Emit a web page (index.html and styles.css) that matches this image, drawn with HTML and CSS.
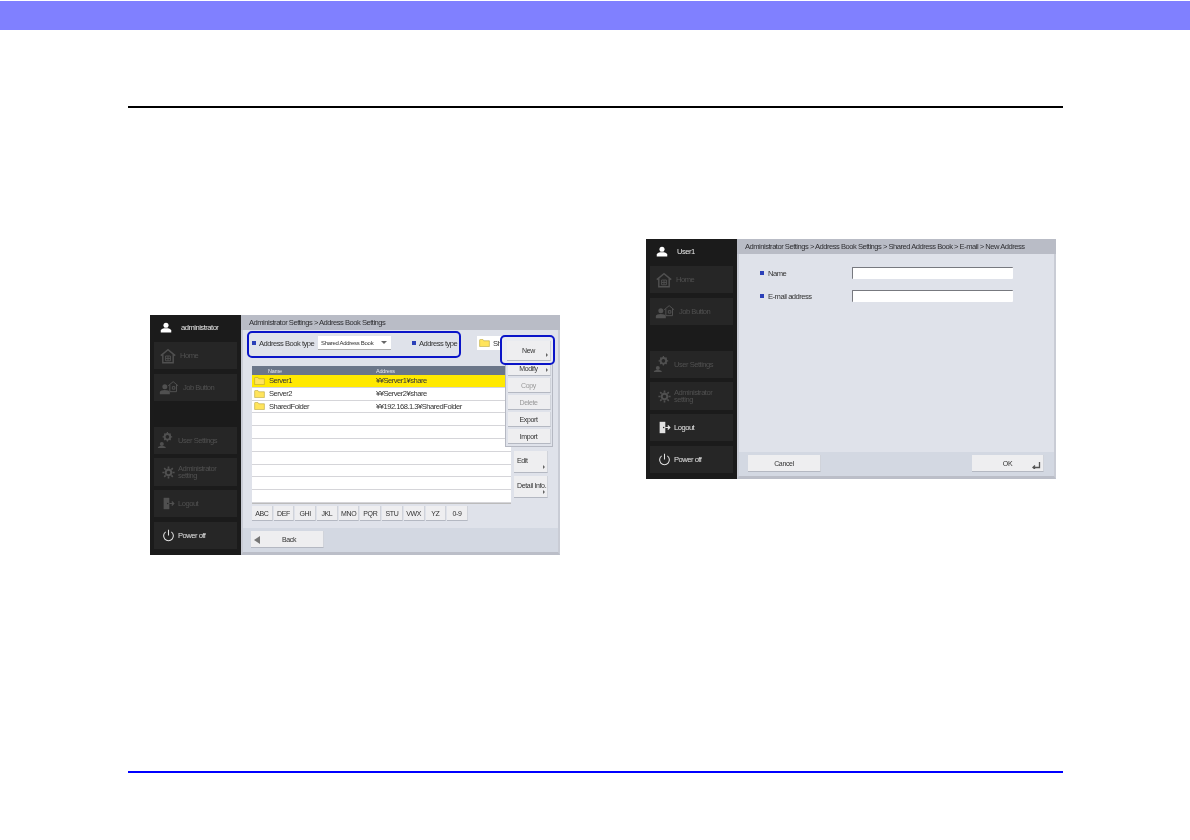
FILE: index.html
```html
<!DOCTYPE html>
<html>
<head>
    <meta charset="UTF-8">
    <title>Address Book Settings</title>
    <link rel="stylesheet" href="styles.css">
</head>
<body>
    <svg class="defs" width="0" height="0">
        <symbol id="i-user" viewBox="0 0 16 14">
            <circle cx="8" cy="4" r="3.4" fill="currentColor"/>
            <path d="M1 13.500V11c0-1.600 3-2.600 4.500-3h5c1.500.4 4.500 1.400 4.500 3v2.500z" fill="currentColor"/>
        </symbol>
        <symbol id="i-home" viewBox="0 0 20 20">
            <path d="M1 9.500L10 2l9 7.500M3.500 8v10.500h13V8" fill="none" stroke="currentColor" stroke-width="1.800"/>
            <path d="M7 10h6v6H7zM10 10v6M7 13h6" fill="none" stroke="currentColor" stroke-width="1.200"/>
        </symbol>
        <symbol id="i-job" viewBox="0 0 24 18">
            <circle cx="7" cy="8" r="3" fill="currentColor"/>
            <path d="M1 17v-2.500C1 13 4 12 7 12s6 1 6 2.500V17z" fill="currentColor"/>
            <path d="M11 7l6-5 6 5M13 6v8h8V6M16 8h3v3h-3z" fill="none" stroke="currentColor" stroke-width="1.200"/>
        </symbol>
        <symbol id="i-settings" viewBox="0 0 20 20">
            <circle cx="6" cy="15" r="2.500" fill="currentColor"/>
            <path d="M1 20c0-2 2-2.500 5-2.500s5 .5 5 2.500z" fill="currentColor"/>
            <circle cx="13" cy="6" r="3.500" fill="none" stroke="currentColor" stroke-width="2.400"/>
            <path d="M13 0v2.500M13 9.500V12M7 6h2.500M16.500 6H19M9 2l1.500 1.500M15.500 8.500L17 10M17 2l-1.500 1.500M10.500 8.500L9 10" stroke="currentColor" stroke-width="1.600"/>
        </symbol>
        <symbol id="i-gear" viewBox="0 0 16 16">
            <circle cx="8" cy="8" r="3.500" fill="none" stroke="currentColor" stroke-width="2.600"/>
            <path d="M8 .5V3M8 13v2.500M.5 8H3M13 8h2.500M2.700 2.700l1.800 1.800M11.500 11.500l1.800 1.800M13.300 2.700l-1.800 1.800M4.500 11.500l-1.800 1.800" stroke="currentColor" stroke-width="2"/>
        </symbol>
        <symbol id="i-logout" viewBox="0 0 16 16">
            <path d="M2 1h7v14H2z" fill="currentColor"/>
            <circle cx="7" cy="8" r=".9" fill="#262626"/>
            <path d="M9 8h5M12 5.500L14.500 8 12 10.500" fill="none" stroke="currentColor" stroke-width="1.500"/>
        </symbol>
        <symbol id="i-power" viewBox="0 0 16 16">
            <path d="M4.500 3.500a6 6 0 1 0 7 0M8 1v7" fill="none" stroke="currentColor" stroke-width="1.300"/>
        </symbol>
        <symbol id="i-folder" viewBox="0 0 12 9">
            <path d="M.5 2V1.200C.5.800.8.500 1.200.500h3l1 1.500h6.300v6.500H.5z" fill="#ffe45c" stroke="#b09a30" stroke-width=".6"/>
        </symbol>
    </svg>

    <div class="top-bar"></div>

    <div class="page">
        <div class="content">
            <div class="screen screen-list">
                <div class="side">
                    <div class="user"><svg class="user-icon"><use href="#i-user"/></svg>administrator</div>
                    <div class="side-btn off"><svg class="ico-home"><use href="#i-home"/></svg>Home</div>
                    <div class="side-btn off"><svg class="ico-job"><use href="#i-job"/></svg>Job Button</div>
                    <div class="side-btn off side-gap"><svg class="ico-settings"><use href="#i-settings"/></svg>User Settings</div>
                    <div class="side-btn off two-line"><svg class="ico-gear"><use href="#i-gear"/></svg><span>Administrator<br>setting</span></div>
                    <div class="side-btn off"><svg class="ico-gear"><use href="#i-logout"/></svg>Logout</div>
                    <div class="side-btn"><svg class="ico-gear"><use href="#i-power"/></svg>Power off</div>
                </div>
                <div class="main">
                    <div class="crumb">Administrator Settings &gt; Address Book Settings</div>
                    <div class="body list-body">
                        <div class="toolbar">
                            <span class="mark"></span><span class="tool-label">Address Book type</span>
                            <span class="select">Shared Address Book<i class="arrow"></i></span>
                            <span class="mark mark-type"></span><span class="tool-label">Address type</span>
                            <span class="folder-btn"><svg class="folder"><use href="#i-folder"/></svg>Sh</span>
                        </div>
                        <div class="list-wrap">
                            <div class="list">
                                <div class="list-head"><span class="col-name">Name</span><span>Address</span></div>
                                <div class="row selected"><svg class="folder"><use href="#i-folder"/></svg><span class="col-file">Server1</span><span>¥¥Server1¥share</span></div>
                                <div class="row"><svg class="folder"><use href="#i-folder"/></svg><span class="col-file">Server2</span><span>¥¥Server2¥share</span></div>
                                <div class="row"><svg class="folder"><use href="#i-folder"/></svg><span class="col-file">SharedFolder</span><span>¥¥192.168.1.3¥SharedFolder</span></div>
                                <div class="row"></div>
                                <div class="row"></div>
                                <div class="row"></div>
                                <div class="row"></div>
                                <div class="row"></div>
                                <div class="row"></div>
                                <div class="row"></div>
                            </div>
                            <div class="list-side">
                                <div class="btn tall">Edit<i class="tick"></i></div>
                                <div class="btn tall">Detail Info.<i class="tick"></i></div>
                            </div>
                        </div>
                        <div class="letters">
                            <span class="btn letter">ABC</span>
                            <span class="btn letter">DEF</span>
                            <span class="btn letter">GHI</span>
                            <span class="btn letter">JKL</span>
                            <span class="btn letter">MNO</span>
                            <span class="btn letter">PQR</span>
                            <span class="btn letter">STU</span>
                            <span class="btn letter">VWX</span>
                            <span class="btn letter">YZ</span>
                            <span class="btn letter">0-9</span>
                        </div>
                    </div>
                    <div class="foot">
                        <div class="btn foot-btn back"><i class="back-arrow"></i>Back</div>
                    </div>
                </div>

                <div class="popup">
                    <div class="btn pop-btn">Modify<i class="tick"></i></div>
                    <div class="btn pop-btn dim">Copy</div>
                    <div class="btn pop-btn dim">Delete</div>
                    <div class="btn pop-btn">Export</div>
                    <div class="btn pop-btn">Import</div>
                </div>
                <div class="callout callout-new"><div class="btn new-btn">New<i class="tick"></i></div></div>
                <div class="callout callout-type"></div>
            </div>

            <div class="screen screen-form">
                <div class="side">
                    <div class="user"><svg class="user-icon"><use href="#i-user"/></svg>User1</div>
                    <div class="side-btn off"><svg class="ico-home"><use href="#i-home"/></svg>Home</div>
                    <div class="side-btn off"><svg class="ico-job"><use href="#i-job"/></svg>Job Button</div>
                    <div class="side-btn off side-gap"><svg class="ico-settings"><use href="#i-settings"/></svg>User Settings</div>
                    <div class="side-btn off two-line"><svg class="ico-gear"><use href="#i-gear"/></svg><span>Administrator<br>setting</span></div>
                    <div class="side-btn"><svg class="ico-gear"><use href="#i-logout"/></svg>Logout</div>
                    <div class="side-btn"><svg class="ico-gear"><use href="#i-power"/></svg>Power off</div>
                </div>
                <div class="main">
                    <div class="crumb">Administrator Settings &gt; Address Book Settings &gt; Shared Address Book &gt; E-mail &gt; New Address</div>
                    <div class="body form-body">
                        <div class="field"><span class="mark"></span><span class="field-label">Name</span><span class="input"></span></div>
                        <div class="field"><span class="mark"></span><span class="field-label">E-mail address</span><span class="input"></span></div>
                    </div>
                    <div class="foot foot-form">
                        <div class="btn foot-btn">Cancel</div>
                        <div class="btn foot-btn ok">OK
                            <svg class="enter" viewBox="0 0 10 8"><path d="M8.500 1v5.500H2M4 4.500L2 6.500 4 8" fill="none" stroke="#555" stroke-width="1.300"/></svg>
                        </div>
                    </div>
                </div>
            </div>
        </div>
        <div class="rule-bottom"></div>
    </div>
</body>
</html>
```

FILE: styles.css
```css
* {
    margin: 0;
    padding: 0;
    box-sizing: border-box;
}

body {
    background-color: white;
    font-family: "Liberation Sans", Arial, sans-serif;
    padding-top: 1px;
}

.defs {
    position: absolute;
}

.top-bar {
    height: 29px;
    background-color: #8080ff;
}

.page {
    width: 935px;
    margin-left: 128px;
    margin-top: 76px;
    border-top: 2px solid black;
}

.content {
    height: 663px;
    display: flex;
    align-items: flex-start;
}

.rule-bottom {
    height: 2px;
    background-color: #0000ff;
}

/* screenshots of the panel */
.screen {
    position: relative;
    width: 410px;
    height: 240px;
    display: flex;
    flex-shrink: 0;
    font-size: 7.600px;
    letter-spacing: -0.5px;
    color: #333;
    background-color: #dfe2ea;
    filter: blur(0.35px);
}

.screen-list {
    margin-top: 207px;
    margin-left: 22px;
}

.screen-form {
    margin-top: 131px;
    margin-left: 86px;
}

.side {
    width: 91px;
    flex-shrink: 0;
    background-color: #1b1b1b;
    padding: 0 4px;
    display: flex;
    flex-direction: column;
    gap: 4.500px;
}

.user {
    height: 22.500px;
    display: flex;
    align-items: center;
    padding: 2px 0 0 6px;
    gap: 9px;
    color: #e6e6e6;
}

.user-icon {
    width: 12px;
    height: 11px;
    color: white;
}

.side-btn {
    height: 27.300px;
    background-color: #262626;
    color: #e2e2e2;
    display: flex;
    align-items: center;
    gap: 4px;
    padding-left: 6px;
    white-space: nowrap;
}

.side-btn svg {
    flex-shrink: 0;
}

.side-btn.off {
    color: #505050;
}

.side-gap {
    margin-top: 21px;
}

.two-line {
    line-height: 7.500px;
}

.ico-home {
    width: 16px;
    height: 16px;
}

.ico-settings {
    width: 16px;
    height: 16px;
    margin-left: -3px;
    margin-right: 1px;
}

.ico-job {
    width: 20px;
    height: 15px;
    margin-left: -1px;
}

.ico-gear {
    width: 13px;
    height: 13px;
    margin-left: 2px;
    margin-right: -1px;
}

.main {
    flex: 1;
    min-width: 0;
    display: flex;
    flex-direction: column;
    border-left: 2px solid #c9ccd5;
    border-right: 2px solid #c9ccd5;
    border-bottom: 3px solid #bbbec8;
}

.crumb {
    height: 15px;
    margin: 0 -2px;
    padding-left: 8px;
    background-color: #b9bcc6;
    display: flex;
    align-items: center;
    white-space: nowrap;
    color: #2f2f33;
}

.body {
    flex: 1;
}

.foot {
    height: 24px;
    background-color: #d3d8e2;
    padding: 3px 8px;
    display: flex;
    justify-content: space-between;
}

.foot-form {
    padding-left: 9px;
    padding-right: 10px;
}

.btn {
    background-color: #eeeef0;
    border-bottom: 1px solid #b4b8c2;
    border-right: 1px solid #d0d3da;
    display: flex;
    align-items: center;
    justify-content: center;
    position: relative;
    font-size: 7px;
    letter-spacing: -0.35px;
    color: #333;
}

.foot-btn {
    width: 73px;
    height: 17px;
}

.back {
    padding-left: 4px;
}

.back-arrow {
    position: absolute;
    left: 3px;
    top: 5px;
    border: 4px solid transparent;
    border-left: 0;
    border-right: 6px solid #777;
}

.ok {
    width: 72px;
}

.enter {
    position: absolute;
    right: 2px;
    bottom: 2px;
    width: 10px;
    height: 8px;
}

.tick {
    position: absolute;
    right: 2px;
    bottom: 3px;
    border: 2px solid transparent;
    border-right: 0;
    border-left: 2.500px solid #666;
}

/* address book list */
.list-body {
    padding: 6px 0 0 9px;
}

.toolbar {
    height: 14px;
    display: flex;
    align-items: center;
}

.mark {
    width: 4px;
    height: 4px;
    background-color: #2a3fb8;
    flex-shrink: 0;
}

.mark-type {
    margin-left: 21px;
}

.tool-label {
    margin-left: 3px;
    white-space: nowrap;
    width: 56px;
}

.select {
    width: 73px;
    height: 14px;
    margin-left: 3px;
    background-color: white;
    border-bottom: 1px solid #aaa;
    display: flex;
    align-items: center;
    padding-left: 3px;
    font-size: 6px;
    letter-spacing: -0.3px;
    white-space: nowrap;
    position: relative;
}

.arrow {
    position: absolute;
    right: 4px;
    top: 5px;
    border: 3px solid transparent;
    border-bottom: 0;
    border-top: 3.500px solid #666;
}

.folder-btn {
    width: 24px;
    height: 14px;
    margin-left: 2px;
    background-color: white;
    display: flex;
    align-items: center;
    gap: 3px;
    padding-left: 2px;
    white-space: nowrap;
    flex-shrink: 0;
}

.folder {
    width: 11px;
    height: 8px;
    flex-shrink: 0;
}

.list-wrap {
    margin-top: 16px;
    display: flex;
    gap: 3px;
}

.list {
    width: 259px;
    height: 138px;
    background-color: white;
    border-bottom: 1px solid #bbb;
}

.list-head {
    height: 9px;
    background-color: #6b7689;
    color: #e4e6ec;
    font-size: 5.500px;
    letter-spacing: -0.2px;
    display: flex;
    align-items: center;
}

.col-name {
    width: 124px;
    padding-left: 16px;
}

.row {
    height: 12.800px;
    border-bottom: 1px solid #d5d5d9;
    display: flex;
    align-items: center;
    padding-left: 2px;
    white-space: nowrap;
}

.row.selected {
    background-color: #ffe900;
}

.col-file {
    width: 111px;
    padding-left: 4px;
}

.list-side {
    width: 34px;
    display: flex;
    flex-direction: column;
    justify-content: flex-end;
    gap: 3px;
    padding-bottom: 6px;
}

.tall {
    height: 22px;
    white-space: nowrap;
    justify-content: flex-start;
    padding: 0 0 3px 3px;
}

.letters {
    display: flex;
    gap: 1px;
    margin-top: 2px;
}

.letter {
    width: 20.700px;
    height: 15px;
}

/* menu lying over the list */
.popup {
    position: absolute;
    left: 355px;
    top: 40px;
    width: 48px;
    height: 92px;
    background-color: #dfe2ea;
    border: 1px solid #b5b8c2;
    padding: 5px 2px 0;
    display: flex;
    flex-direction: column;
    gap: 2px;
    align-items: center;
}

.pop-btn {
    width: 43px;
    height: 15px;
    flex-shrink: 0;
}

.dim {
    color: #9a9a9a;
}

.callout {
    position: absolute;
    border: 2.500px solid #0a14c8;
    border-radius: 5px;
}

.callout-type {
    left: 97px;
    top: 16px;
    width: 214px;
    height: 27px;
}

.callout-new {
    left: 350px;
    top: 20px;
    width: 55px;
    height: 30px;
    background-color: #e9ebf0;
    padding: 4px 2px 0 5px;
}

.new-btn {
    height: 20px;
}

/* new address form */
.form-body {
    padding: 13px 0 0 21px;
    display: flex;
    flex-direction: column;
    gap: 11px;
}

.field {
    height: 12px;
    display: flex;
    align-items: center;
}

.field-label {
    width: 88px;
    padding-left: 4px;
}

.input {
    width: 161px;
    height: 12px;
    background-color: white;
    border-top: 1px solid #77797f;
    border-left: 1px solid #77797f;
    border-radius: 1px;
}
```
